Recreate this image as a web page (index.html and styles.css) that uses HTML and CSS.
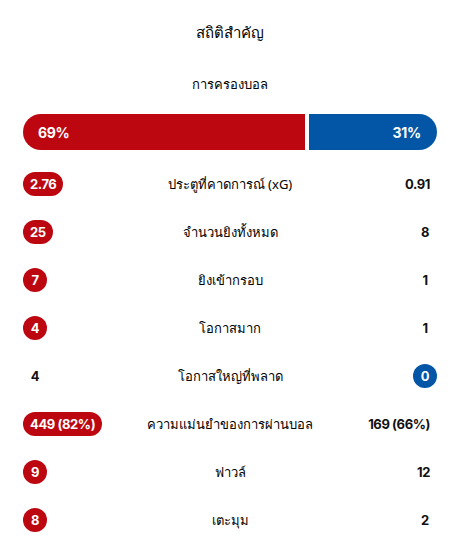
FILE: index.html
```html
<!DOCTYPE html>
<html lang="th">
<head>
<meta charset="utf-8">
<link rel="stylesheet" href="styles.css">
</head>
<body>
<div class="stats">
  <h2 class="title">สถิติสำคัญ</h2>
  <div class="section-label">การครองบอล</div>
  <div class="possession">
    <div class="poss home" style="width: calc(69% - 4px)">69%</div>
    <div class="poss away">31%</div>
  </div>
  <div class="rows">
    <div class="row"><div class="cell left"><span class="val win-home">2.76</span></div><div class="label">ประตูที่คาดการณ์ (xG)</div><div class="cell right"><span class="val">0.91</span></div></div>
    <div class="row"><div class="cell left"><span class="val win-home">25</span></div><div class="label">จำนวนยิงทั้งหมด</div><div class="cell right"><span class="val">8</span></div></div>
    <div class="row"><div class="cell left"><span class="val win-home">7</span></div><div class="label">ยิงเข้ากรอบ</div><div class="cell right"><span class="val">1</span></div></div>
    <div class="row"><div class="cell left"><span class="val win-home">4</span></div><div class="label">โอกาสมาก</div><div class="cell right"><span class="val">1</span></div></div>
    <div class="row"><div class="cell left"><span class="val">4</span></div><div class="label">โอกาสใหญ่ที่พลาด</div><div class="cell right"><span class="val win-away">0</span></div></div>
    <div class="row"><div class="cell left"><span class="val win-home">449 (82%)</span></div><div class="label">ความแม่นยำของการผ่านบอล</div><div class="cell right"><span class="val">169 (66%)</span></div></div>
    <div class="row"><div class="cell left"><span class="val win-home">9</span></div><div class="label">ฟาวล์</div><div class="cell right"><span class="val">12</span></div></div>
    <div class="row"><div class="cell left"><span class="val win-home">8</span></div><div class="label">เตะมุม</div><div class="cell right"><span class="val">2</span></div></div>
  </div>
</div>
</body>
</html>
```
FILE: styles.css
```css
* { box-sizing: border-box; }
body {
  margin: 0;
  background: #fff;
  color: #000;
  font-family: "Noto Sans", "DejaVu Sans", sans-serif;
}
.stats {
  padding: 22px 32px 0 23px;
}
.title {
  margin: 0;
  font-size: 15px;
  font-weight: 400;
  line-height: 20px;
  text-align: center;
}
.section-label {
  margin-top: 32px;
  font-size: 13px;
  line-height: 20px;
  text-align: center;
}
.possession {
  margin-top: 20px;
  display: flex;
  gap: 4px;
  height: 36px;
}
.poss {
  display: flex;
  align-items: center;
  color: #fff;
  font-family: "Inter", sans-serif;
  font-weight: 700;
  font-size: 14px;
  letter-spacing: -0.3px;
}
.poss.home {
  flex: none;
  background: #bc0710;
  border-radius: 18px 0 0 18px;
  padding-left: 15px;
}
.poss.away {
  flex: 1;
  background: #0256a5;
  border-radius: 0 18px 18px 0;
  justify-content: flex-end;
  padding-right: 16px;
}
.rows {
  margin-top: 10px;
}
.row {
  display: grid;
  grid-template-columns: 1fr auto 1fr;
  align-items: center;
  height: 48px;
}
.cell { display: flex; }
.cell.right { justify-content: flex-end; }
.label {
  font-size: 13px;
  text-align: center;
}
.val {
  display: inline-flex;
  align-items: center;
  justify-content: center;
  min-width: 24px;
  height: 24px;
  padding: 0 7px;
  border-radius: 12px;
  font-family: "Inter", sans-serif;
  font-weight: 700;
  font-size: 13px;
  letter-spacing: -0.4px;
  color: #111;
}
.val.win-home { background: #bc0710; color: #fff; }
.val.win-away { background: #0256a5; color: #fff; }
```
